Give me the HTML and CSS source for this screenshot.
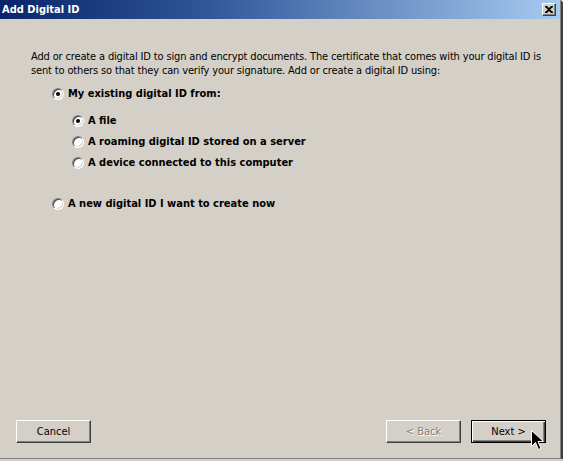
FILE: index.html
```html
<!DOCTYPE html>
<html>
<head>
<meta charset="utf-8">
<link rel="stylesheet" href="styles.css">
</head>
<body>
<div class="window">
  <div class="titlebar">
    <span class="title">Add Digital ID</span>
    <span class="close">
      <svg width="8" height="7" viewBox="0 0 8 7"><path d="M0 0h2l2 2 2-2h2v1L5 3.5 8 6v1H6L4 5 2 7H0V6l3-2.5L0 1z" fill="#000"/></svg>
    </span>
  </div>
  <div class="body">
    <div class="content">
      <p class="intro">Add or create a digital ID to sign and encrypt documents. The certificate that comes with your digital ID is sent to others so that they can verify your signature. Add or create a digital ID using:</p>
      <div class="option top"><span class="radio checked"></span><span class="label">My existing digital ID from:</span></div>
      <div class="suboptions">
        <div class="option"><span class="radio checked"></span><span class="label">A file</span></div>
        <div class="option"><span class="radio"></span><span class="label">A roaming digital ID stored on a server</span></div>
        <div class="option"><span class="radio"></span><span class="label">A device connected to this computer</span></div>
      </div>
      <div class="option top new"><span class="radio"></span><span class="label">A new digital ID I want to create now</span></div>
    </div>
    <div class="buttons">
      <span class="btn">Cancel</span>
      <span class="spacer"></span>
      <span class="btn disabled">&lt; Back</span>
      <span class="btn default">Next &gt;</span>
    </div>
    <svg class="cursor" width="13" height="21" viewBox="0 0 13 21"><path d="M0.5 0.5v16l4-4 3 7 2.5-1-3-7h5.5z" fill="#000" stroke="#fff" stroke-width="1"/></svg>
  </div>
</div>
</body>
</html>
```
FILE: styles.css
```css
html, body {
  margin: 0;
  padding: 0;
  background: #d4d0c8;
}
.window {
  width: 560px;
  height: 458px;
  background: #d4d0c8;
  border-right: 1px solid #808080;
  border-bottom: 1px solid #808080;
  box-shadow: 1px 1px 0 #404040, 2px 2px 0 #404040;
  display: flex;
  flex-direction: column;
  font-family: "DejaVu Sans Condensed", "DejaVu Sans", sans-serif;
  font-size: 11px;
  color: #000;
}
.titlebar {
  height: 19px;
  background: linear-gradient(to right, #0a246a 0%, #2c5496 35%, #a6caf0 100%);
  display: flex;
  align-items: center;
  padding: 0 3px 0 2px;
}
.title {
  color: #fff;
  font-weight: bold;
  font-size: 11px;
  flex: 1;
}
.close {
  width: 12px;
  height: 11px;
  background: #d4d0c8;
  border-top: 1px solid #fff;
  border-left: 1px solid #fff;
  border-right: 1px solid #404040;
  border-bottom: 1px solid #404040;
  box-shadow: inset -1px -1px 0 #808080;
  display: flex;
  align-items: center;
  justify-content: center;
  margin-right: 1px;
}
.body {
  flex: 1;
  display: flex;
  flex-direction: column;
  position: relative;
}
.content {
  flex: 1;
  padding: 31px 12px 0 31px;
}
.intro {
  margin: 0;
  line-height: 14px;
  letter-spacing: -0.15px;
}
.option {
  display: flex;
  align-items: center;
  height: 21px;
}
.option.top {
  margin-top: 5px;
  margin-left: 21px;
}
.option.new {
  margin-top: 20px;
}
.suboptions {
  margin-left: 41px;
  margin-top: 6px;
}
.radio {
  width: 10px;
  height: 10px;
  border-radius: 50%;
  background: #fff;
  border: 1px solid;
  border-color: #808080 #fff #fff #808080;
  box-shadow: inset 1px 1px 0 #404040, inset -1px -1px 0 #d4d0c8;
  margin-right: 4px;
  display: flex;
  align-items: center;
  justify-content: center;
  flex: none;
}
.radio.checked::after {
  content: "";
  width: 4px;
  height: 4px;
  border-radius: 50%;
  background: #000;
}
.label {
  font-weight: bold;
}
.buttons {
  display: flex;
  align-items: center;
  padding: 0 14px 15px 16px;
  gap: 10px;
}
.spacer {
  flex: 1;
}
.btn {
  box-sizing: border-box;
  width: 75px;
  height: 23px;
  background: #d4d0c8;
  border-top: 1px solid #fff;
  border-left: 1px solid #fff;
  border-right: 1px solid #404040;
  border-bottom: 1px solid #404040;
  box-shadow: inset -1px -1px 0 #808080;
  display: flex;
  align-items: center;
  justify-content: center;
  font-size: 11px;
}
.btn.disabled {
  color: #808080;
  text-shadow: 1px 1px 0 #fff;
}
.btn.default {
  border: 1px solid #000;
  box-shadow: inset 1px 1px 0 #fff, inset -1px -1px 0 #404040, inset -2px -2px 0 #808080;
}
.cursor {
  position: absolute;
  left: 531px;
  top: 411px;
}
```
